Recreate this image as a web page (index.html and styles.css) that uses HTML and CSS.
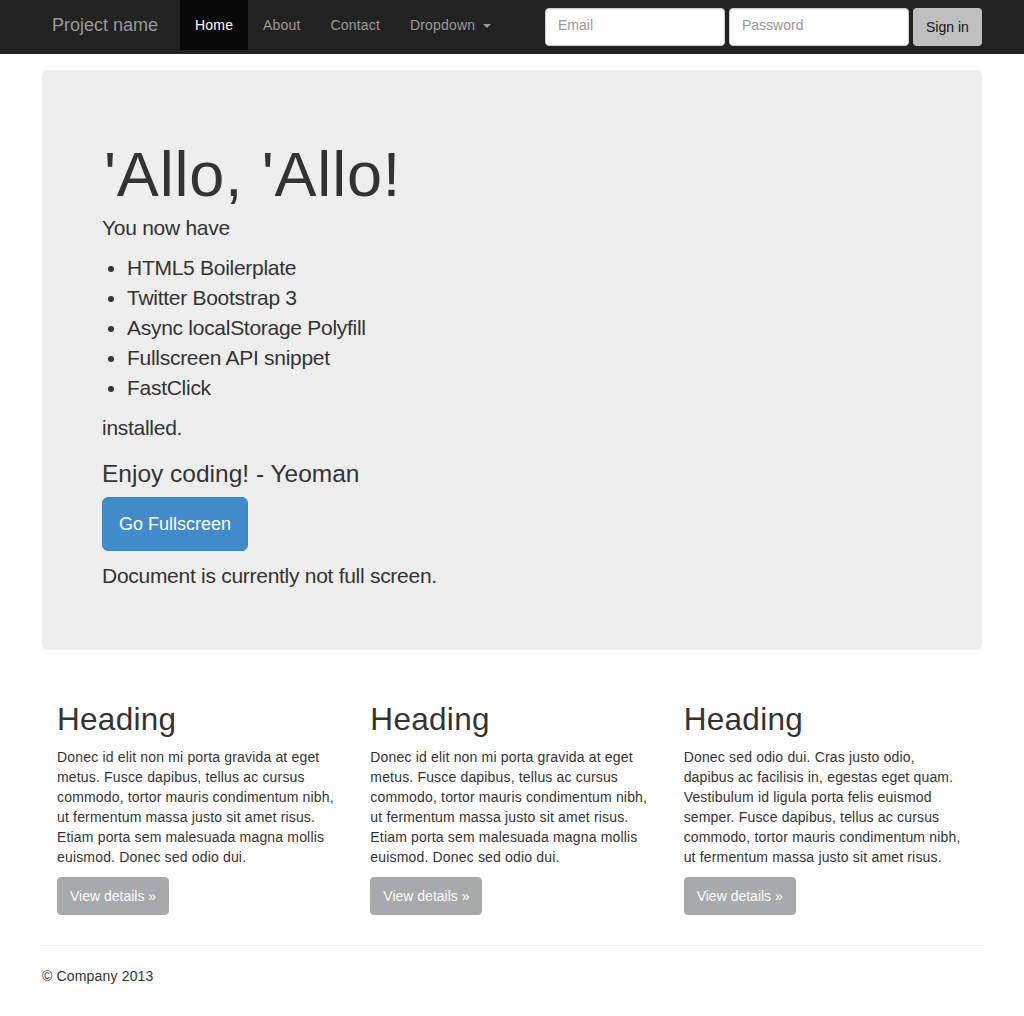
FILE: index.html
```html
<!DOCTYPE html>
<html lang="en">
<head>
<meta charset="utf-8">
<title>Project name</title>
<link rel="stylesheet" href="styles.css">
</head>
<body>
<header class="navbar">
  <div class="navbar-inner">
    <a class="brand" href="#">Project name</a>
    <ul class="nav">
      <li><a class="nav-link active" href="#">Home</a></li>
      <li><a class="nav-link" href="#about">About</a></li>
      <li><a class="nav-link" href="#contact">Contact</a></li>
      <li><a class="nav-link" href="#">Dropdown <span class="caret"></span></a></li>
    </ul>
    <form class="navbar-form">
      <input class="form-control" type="text" placeholder="Email">
      <input class="form-control" type="password" placeholder="Password">
      <button class="signin" type="button">Sign in</button>
    </form>
  </div>
</header>

<main class="container">
  <section class="jumbotron">
    <h1 class="hero-title">'Allo, 'Allo!</h1>
    <p class="lead">You now have</p>
    <ul class="features">
      <li>HTML5 Boilerplate</li>
      <li>Twitter Bootstrap 3</li>
      <li>Async localStorage Polyfill</li>
      <li>Fullscreen API snippet</li>
      <li>FastClick</li>
    </ul>
    <p class="lead tight">installed.</p>
    <h3 class="enjoy">Enjoy coding! - Yeoman</h3>
    <div class="action">
      <a class="btn-primary-lg" href="#">Go Fullscreen</a>
    </div>
    <p class="lead tight">Document is currently not full screen.</p>
  </section>

  <div class="row">
    <div class="col">
      <h2 class="col-title">Heading</h2>
      <p class="col-text">Donec id elit non mi porta gravida at eget metus. Fusce dapibus, tellus ac cursus commodo, tortor mauris condimentum nibh, ut fermentum massa justo sit amet risus. Etiam porta sem malesuada magna mollis euismod. Donec sed odio dui.</p>
      <p class="col-text"><a class="btn-details" href="#">View details »</a></p>
    </div>
    <div class="col">
      <h2 class="col-title">Heading</h2>
      <p class="col-text">Donec id elit non mi porta gravida at eget metus. Fusce dapibus, tellus ac cursus commodo, tortor mauris condimentum nibh, ut fermentum massa justo sit amet risus. Etiam porta sem malesuada magna mollis euismod. Donec sed odio dui.</p>
      <p class="col-text"><a class="btn-details" href="#">View details »</a></p>
    </div>
    <div class="col">
      <h2 class="col-title">Heading</h2>
      <p class="col-text">Donec sed odio dui. Cras justo odio, dapibus ac facilisis in, egestas eget quam. Vestibulum id ligula porta felis euismod semper. Fusce dapibus, tellus ac cursus commodo, tortor mauris condimentum nibh, ut fermentum massa justo sit amet risus.</p>
      <p class="col-text"><a class="btn-details" href="#">View details »</a></p>
    </div>
  </div>

  <footer class="footer">
    <p>© Company 2013</p>
  </footer>
</main>
</body>
</html>
```

FILE: styles.css
```css
* { box-sizing: border-box; }

body {
  margin: 0;
  font-family: "Liberation Sans", Helvetica, Arial, sans-serif;
  font-size: 14px;
  line-height: 20px;
  letter-spacing: 0.17px;
  color: #333;
  background: #fff;
}

a { text-decoration: none; }

/* Navbar */
.navbar {
  background: #222;
  height: 54px;
}
.navbar-inner {
  width: 970px;
  margin: 0 auto;
  padding: 0 15px;
  display: flex;
  align-items: flex-start;
}
.brand {
  display: block;
  padding: 15px 22px 15px 10px;
  font-size: 18px;
  line-height: 20px;
  letter-spacing: 0;
  color: #999;
}
.nav {
  list-style: none;
  margin: 0;
  padding: 0;
  display: flex;
}
.nav-link {
  display: block;
  padding: 15px;
  line-height: 20px;
  color: #999;
}
.nav-link.active {
  color: #fff;
  background: #080808;
}
.caret {
  display: inline-block;
  width: 0;
  height: 0;
  margin-left: 4px;
  vertical-align: middle;
  border-top: 4px solid #999;
  border-left: 4px solid transparent;
  border-right: 4px solid transparent;
}
.navbar-form {
  margin: 8px 0 0 auto;
  display: flex;
  gap: 4px;
}
.form-control {
  width: 180px;
  height: 38px;
  padding: 6px 12px 10px;
  font-family: inherit;
  font-size: 14px;
  line-height: 20px;
  color: #555;
  background: #fff;
  border: 1px solid #ccc;
  border-radius: 4px;
  box-shadow: inset 0 1px 1px rgba(0,0,0,0.075);
  outline: none;
}
.form-control::placeholder { color: #999; }
.signin {
  width: 69px;
  height: 38px;
  padding: 0 13px;
  font-family: inherit;
  font-size: 14px;
  color: #111;
  background: #bfbfbf;
  border: none;
  border-radius: 4px;
  text-align: left;
}

/* Main container */
.container {
  width: 940px;
  margin: 0 auto;
}

.jumbotron {
  margin: 16px 0 30px;
  padding: 76px 60px 59px;
  background: #eee;
  border-radius: 6px;
  font-size: 21px;
  line-height: 30px;
  letter-spacing: -0.28px;
}
.hero-title {
  margin: 0 0 10px 2px;
  font-size: 63px;
  line-height: 57px;
  font-weight: normal;
  letter-spacing: 0.8px;
  color: #333;
}
.lead {
  margin: 0 0 10px;
}
.lead.tight { margin: 0; }
.features {
  margin: 0 0 10px;
  padding-left: 25px;
}
.enjoy {
  margin: 18px 0 10px;
  font-size: 24.5px;
  line-height: 26px;
  font-weight: normal;
  letter-spacing: 0;
}
.action {
  display: flex;
  margin-bottom: 10px;
}
.btn-primary-lg {
  display: block;
  padding: 14px 16px;
  font-size: 18px;
  line-height: 24px;
  letter-spacing: 0;
  color: #fff;
  background: #428bca;
  border: 1px solid #3f87c6;
  border-radius: 6px;
}

/* Columns */
.row {
  display: grid;
  grid-template-columns: repeat(3, 1fr);
}
.col {
  padding: 0 15px;
}
.col-title {
  margin: 22px 0 10px;
  font-size: 31.5px;
  line-height: 34.65px;
  font-weight: normal;
  letter-spacing: 0.3px;
}
.col-text {
  margin: 0 0 10px;
}
.btn-details {
  display: inline-block;
  padding: 8px 12px;
  line-height: 20px;
  letter-spacing: 0;
  color: #fff;
  background: #a7a9aa;
  border: 1px solid #a7a9aa;
  border-radius: 4px;
}

.footer {
  margin-top: 20px;
  padding-top: 20px;
  border-top: 1px solid #eee;
}
.footer p { margin: 0 0 10px; }
```
